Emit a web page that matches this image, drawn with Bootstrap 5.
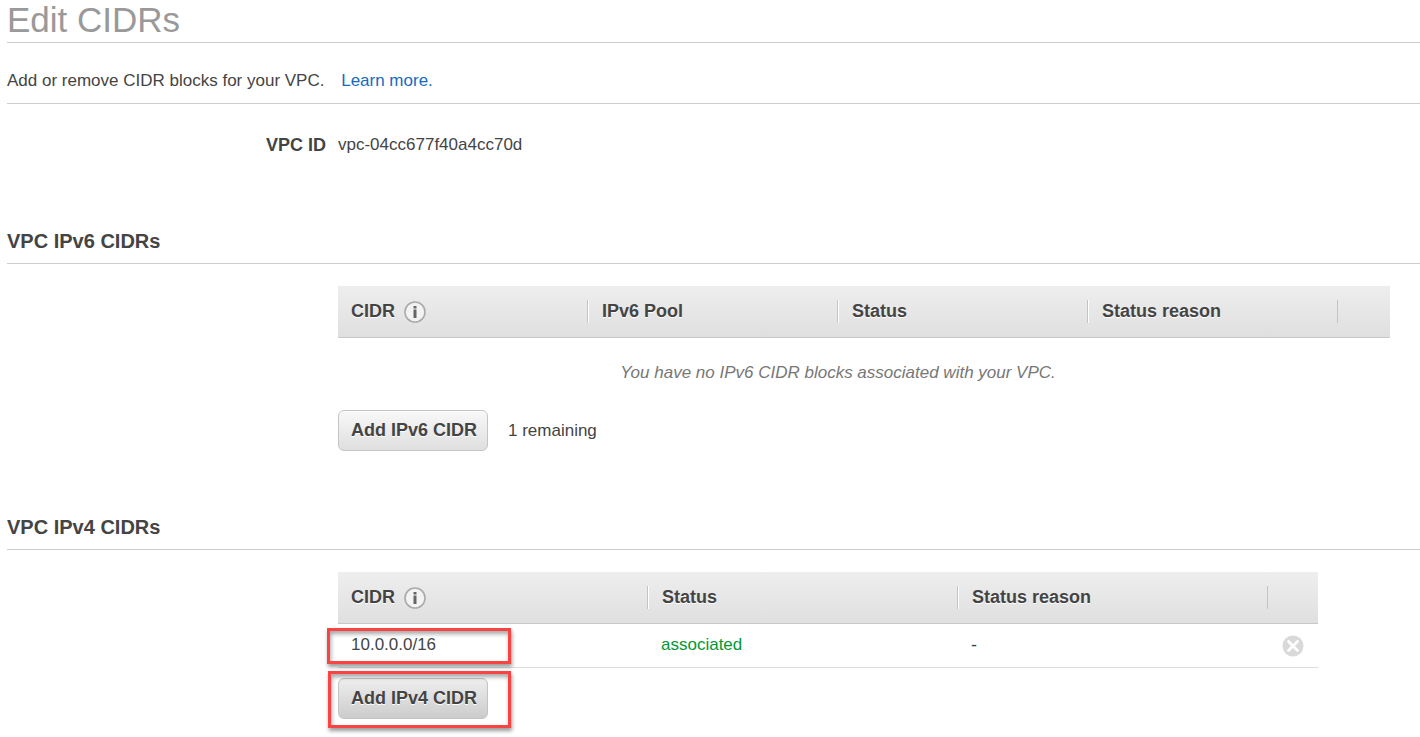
<!DOCTYPE html>
<html lang="en">
<head>
<meta charset="utf-8">
<meta name="viewport" content="width=device-width, initial-scale=1">
<title>Edit CIDRs</title>
<link href="https://cdn.jsdelivr.net/npm/bootstrap@5.3.0/dist/css/bootstrap.min.css" rel="stylesheet">
<style>
  body { font-family: "Liberation Sans", Arial, sans-serif; font-size: 18px; line-height: 24px; color: #444; background: #fff; }
  .page { padding: 0 0 18px 7px; }
  .page-title { font-size: 35px; line-height: 40px; padding-bottom: 2px; color: #999; border-bottom: 1px solid #ccc; }
  .copy { font-size: 17px; }
  .intro { padding: 26px 0 10px; border-bottom: 1px solid #ccc; }
  .intro a { color: #166bc0; text-decoration: none; margin-left: 7px; }
  .label-col { flex: 0 1 331px; min-width: 0; }
  .field { padding: 29px 0 72px; }
  .section-title { font-size: 20px; line-height: 24px; font-weight: 700; padding-bottom: 10px; margin: 0 0 22px; border-bottom: 1px solid #ccc; }
  .cidr-table { table-layout: fixed; border-collapse: separate; border-spacing: 0; width: 100%; }
  .wide { max-width: 1052px; }
  .narrow { max-width: 980px; }
  .cidr-table thead { background: linear-gradient(#eee, #dfdfdf); }
  .cidr-table th { height: 52px; padding: 0 0 2px 14px; border-bottom: 1px solid #c8c8c8; text-shadow: 0 1px 0 #fff;
    background: linear-gradient(#c4c4c4, #c4c4c4) right 0 top 14px / 1px 23px no-repeat, linear-gradient(#fff, #fff) left 0 top 14px / 1px 23px no-repeat; }
  .cidr-table th:first-child { background: linear-gradient(#c4c4c4, #c4c4c4) right 0 top 14px / 1px 23px no-repeat; }
  .cidr-table th:first-child, .cidr-table td:first-child { padding-left: 13px; }
  .cidr-table th:last-child { background: none; }
  .cidr-table td { height: 44px; padding: 0 0 2px 13px; border-bottom: 1px solid #ddd; }
  .cidr-table td.empty { height: 72px; border: 0; padding: 0 52px 2px 0; font-style: italic; color: #777; text-align: center; }
  .associated { color: #093; }
  .add-btn { --bs-btn-color: #444; --bs-btn-hover-color: #222; --bs-btn-border-color: #c4c4c4; --bs-btn-hover-border-color: #aaa;
    --bs-btn-border-radius: 6px; --bs-btn-padding-x: 12px; --bs-btn-padding-y: 7px; --bs-btn-font-size: 18px; --bs-btn-line-height: 25px;
    width: 150px; font-weight: 700; white-space: nowrap; text-shadow: 0 1px 0 #fff; background: linear-gradient(#f8f8f8, #dfdfdf); box-shadow: inset 0 1px 0 #fff; }
  .add-btn.shaded { background: linear-gradient(#eee, #ccc); box-shadow: none; }
  .add-row { margin-top: 10px; }
  .icon-btn { border: 0; padding: 0; background: none; line-height: 0; }
  .marker { position: absolute; pointer-events: none; border: 3px solid #fa4343; box-shadow: 1px 3px 4px rgba(0,0,0,.4), inset 1px 3px 4px rgba(0,0,0,.35); }
  .marker-row { left: -11px; top: 4px; width: 184px; height: 36px; }
  .marker-button { left: -10px; top: -7px; width: 183px; height: 57px; }
</style>
</head>
<body>
<main class="page">
  <h1 class="page-title fw-normal m-0">Edit CIDRs</h1>
  <p class="intro copy m-0">Add or remove CIDR blocks for your VPC. <a class="ms-2 ps-1" href="#">Learn more.</a></p>

  <dl class="field d-flex m-0">
    <dt class="label-col text-end pe-2"><span class="me-1">VPC ID</span></dt>
    <dd class="copy m-0">vpc-04cc677f40a4cc70d</dd>
  </dl>

  <section>
    <h2 class="section-title">VPC IPv6 CIDRs</h2>
    <div class="d-flex">
      <div class="label-col"></div>
      <div class="flex-grow-1">
        <table class="cidr-table wide">
          <colgroup><col span="4"><col width="52"></colgroup>
          <thead><tr>
            <th scope="col"><span class="d-flex align-items-center">CIDR
              <button class="icon-btn ms-2" type="button" aria-label="About IPv6 CIDR"><svg width="25" height="24" viewBox="0 0 25 24" aria-hidden="true"><circle cx="12" cy="13" r="10" fill="#f3f3f3" stroke="#aaa" stroke-width="1.6"/><path d="M12 7v2.5M12 10.5v8.5" stroke="#666" stroke-width="3"/></svg></button></span></th>
            <th scope="col">IPv6 Pool</th><th scope="col">Status</th><th scope="col">Status reason</th><th aria-label="Actions"></th>
          </tr></thead>
          <tbody><tr><td class="empty copy" colspan="5">You have no IPv6 CIDR blocks associated with your VPC.</td></tr></tbody>
        </table>
        <div class="d-flex align-items-center">
          <button class="btn add-btn" type="button">Add IPv6 CIDR</button>
          <span class="copy ms-3 ps-1">1 remaining</span>
        </div>
      </div>
    </div>
  </section>

  <section class="mt-5 pt-3">
    <h2 class="section-title">VPC IPv4 CIDRs</h2>
    <div class="d-flex">
      <div class="label-col"></div>
      <div class="flex-grow-1">
        <table class="cidr-table narrow">
          <colgroup><col span="3"><col width="50"></colgroup>
          <thead><tr>
            <th scope="col"><span class="d-flex align-items-center">CIDR
              <button class="icon-btn ms-2" type="button" aria-label="About IPv4 CIDR"><svg width="25" height="24" viewBox="0 0 25 24" aria-hidden="true"><circle cx="12" cy="13" r="10" fill="#f3f3f3" stroke="#aaa" stroke-width="1.6"/><path d="M12 7v2.5M12 10.5v8.5" stroke="#666" stroke-width="3"/></svg></button></span></th>
            <th scope="col">Status</th><th scope="col">Status reason</th><th aria-label="Actions"></th>
          </tr></thead>
          <tbody><tr>
            <td class="copy position-relative">10.0.0.0/16<span class="marker marker-row"></span></td>
            <td class="copy associated">associated</td>
            <td>-</td>
            <td><button class="icon-btn" type="button" aria-label="Remove CIDR"><svg width="24" height="22" viewBox="0 0 24 22" aria-hidden="true"><circle cx="12" cy="11" r="10.5" fill="#d9d9d9"/><path d="M7.5 6.5l9 9M16.5 6.5l-9 9" stroke="#fff" stroke-width="2.8" stroke-linecap="round"/></svg></button></td>
          </tr></tbody>
        </table>
        <div class="add-row d-flex">
          <div class="position-relative">
            <button class="btn add-btn shaded" type="button">Add IPv4 CIDR</button>
            <span class="marker marker-button"></span>
          </div>
        </div>
      </div>
    </div>
  </section>
</main>
<script src="https://cdn.jsdelivr.net/npm/bootstrap@5.3.0/dist/js/bootstrap.bundle.min.js"></script>
</body>
</html>
